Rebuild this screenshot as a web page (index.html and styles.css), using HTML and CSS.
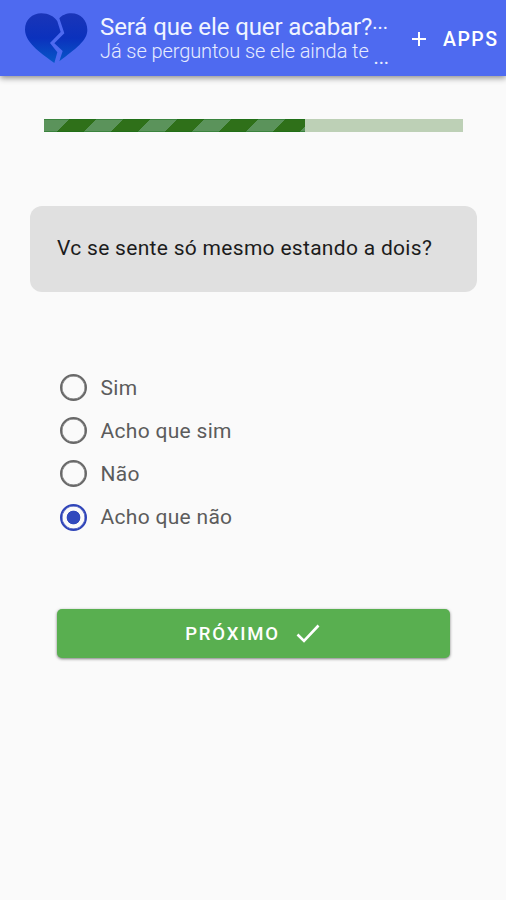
FILE: index.html
```
<!DOCTYPE html>
<html lang="pt-BR">
<head>
    <meta charset="UTF-8">
    <meta name="viewport" content="width=device-width, initial-scale=1.0">
    <title>Será que ele quer acabar?</title>
    <link rel="stylesheet" href="styles.css">
</head>
<body>
    <header>
        <svg class="logo" viewBox="0 0 189 150">
            <defs>
                <linearGradient id="azul" x1="0" y1="0" x2="0" y2="150" gradientUnits="userSpaceOnUse">
                    <stop offset="0" stop-color="#1a35b8"/>
                    <stop offset="0.5" stop-color="#0b31bd"/>
                    <stop offset="1" stop-color="#0658c8"/>
                </linearGradient>
            </defs>
            <path fill="url(#azul)" d="M88 150C58 126 0 92 0 50C0 20 22 1 49 1C70 1 88 10 97 25L107 57L75 90L97 118Z"/>
            <path fill="url(#azul)" d="M103 16C110 7 124 1 139 1C167 1 187 22 187 51C187 84 150 108 103 145L113 114L88 91L118 61Z"/>
        </svg>
        <div class="titulos">
            <h1>Será que ele quer acabar?<span class="mais">...</span></h1>
            <p>Já se perguntou se ele ainda te <span class="mais">...</span></p>
        </div>
        <button class="apps">
            <svg viewBox="0 0 14 14"><path d="M7 0V14M0 7H14"/></svg>
            <span>APPS</span>
        </button>
    </header>

    <main>
        <div class="barra">
            <div class="progresso" style="width: 62.4%"></div>
        </div>

        <div class="pergunta">Vc se sente só mesmo estando a dois?</div>

        <form>
            <div class="opcoes">
                <label><input type="radio" name="resposta"><span>Sim</span></label>
                <label><input type="radio" name="resposta"><span>Acho que sim</span></label>
                <label><input type="radio" name="resposta"><span>Não</span></label>
                <label><input type="radio" name="resposta" checked><span>Acho que não</span></label>
            </div>

            <button type="button" class="proximo">
                <span>PRÓXIMO</span>
                <svg viewBox="0 0 24 19"><path d="M1.5 10.5L8 17L22.5 1.5"/></svg>
            </button>
        </form>
    </main>
</body>
</html>
```

FILE: styles.css
```
* {
    box-sizing: border-box;
}
body {
    margin: 0;
    min-height: 100vh;
    font-family: Roboto, sans-serif;
    background-color: #fafafa;
}
header {
    display: flex;
    height: 76px;
    background-color: #4e6af0;
    color: #fff;
    box-shadow: 0 2px 6px rgba(0,0,0,0.45);
}
.logo {
    width: 63px;
    height: 50px;
    margin: 13px 12px 0 25px;
    flex-shrink: 0;
}
.titulos {
    width: 300px;
    padding-top: 14px;
    flex-shrink: 0;
    white-space: nowrap;
}
h1 {
    margin: 0;
    font-size: 24px;
    font-weight: 400;
    line-height: 27px;
    letter-spacing: -0.1px;
    color: #f0f4ff;
}
h1 .mais {
    position: relative;
    top: -6px;
    font-size: 20px;
}
.titulos p {
    margin: 0;
    font-size: 20px;
    font-weight: 300;
    line-height: 18px;
    letter-spacing: -0.09px;
    color: #e6ecff;
}
.titulos p .mais {
    position: relative;
    top: 6px;
    font-size: 20px;
    font-weight: 400;
}
button {
    padding: 0;
    border: none;
    background: none;
    color: #fff;
    font-family: inherit;
    font-weight: 500;
    cursor: pointer;
}
button svg {
    fill: none;
    stroke: #fff;
}
.apps {
    display: flex;
    align-items: center;
    gap: 17px;
    margin-left: 12px;
    padding-top: 1px;
    font-size: 19.5px;
    letter-spacing: 1.5px;
}
.apps svg {
    width: 14px;
    height: 14px;
    stroke-width: 2;
}
.apps span {
    padding-top: 1px;
}
main {
    padding: 43px 29px 0 30px;
}
.barra {
    height: 13px;
    margin: 0 14px;
    background-color: #bdd0b6;
}
.progresso {
    height: 100%;
    background: repeating-linear-gradient(135deg, #5b935b 0 18.3px, #2f7019 18.3px 37.4px, #5b935b 37.4px 38.2px);
    box-shadow: inset 0 1px rgba(10,110,20,0.4), inset 0 -1px rgba(10,110,20,0.4);
}
.pergunta {
    height: 86px;
    margin-top: 74px;
    padding: 0 27px;
    border-radius: 12px;
    background-color: #e0e0e0;
    color: #1c1c1c;
    font-size: 21px;
    line-height: 84px;
    letter-spacing: 0.3px;
    white-space: nowrap;
}
.opcoes {
    margin: 74px 0 0 30px;
}
label {
    display: flex;
    align-items: center;
    height: 43.2px;
    color: #5c5c5c;
    font-size: 21px;
    letter-spacing: 0.3px;
}
input {
    appearance: none;
    width: 27px;
    height: 27px;
    margin: 0 13.5px 0 0;
    border: 2px solid #686868;
    border-radius: 50%;
    box-shadow: inset 0 0 0 0.5px #686868;
}
input:checked {
    border-color: #2f44b8;
    background: radial-gradient(circle, #3149bd 6.5px, transparent 7.2px);
    box-shadow: inset 0 0 0 0.5px #2f44b8;
}
.proximo {
    display: flex;
    align-items: center;
    justify-content: center;
    gap: 16px;
    width: 393px;
    height: 49px;
    margin: 70px 0 0 27px;
    padding-right: 2px;
    border-radius: 5px;
    background-color: #59af50;
    box-shadow: 0 1px 3px rgba(0,0,0,0.5);
    font-size: 18.5px;
    letter-spacing: 1.8px;
}
.proximo span {
    padding-top: 1px;
}
.proximo svg {
    width: 24px;
    height: 19px;
    stroke-width: 2.6;
}
```
